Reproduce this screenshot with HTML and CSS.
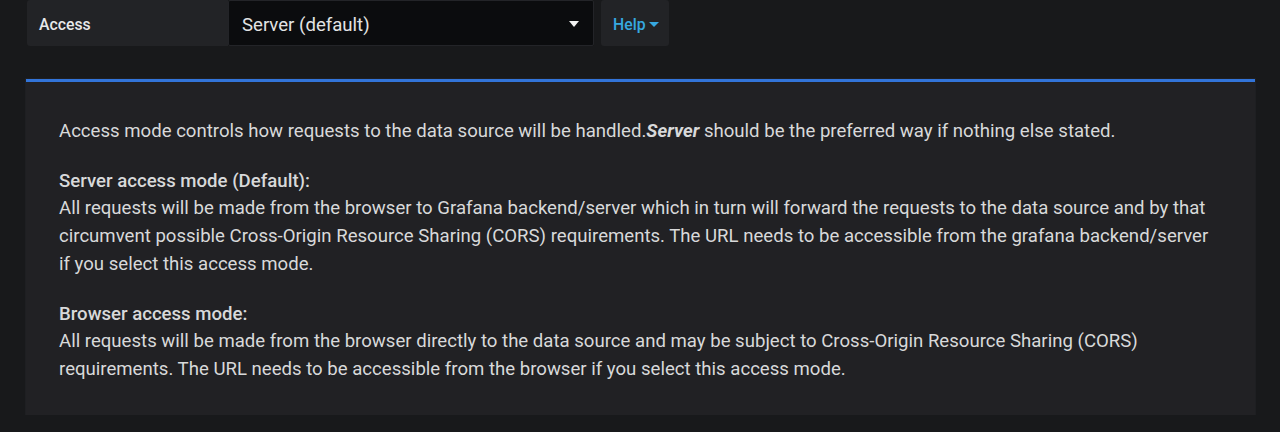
FILE: index.html
```html
<!DOCTYPE html>
<html>
<head>
<meta charset="utf-8">
<link rel="stylesheet" href="styles.css">
</head>
<body>
<div class="page">
  <div class="form-row">
    <div class="label">Access</div>
    <div class="select">
      <span>Server (default)</span>
      <span class="caret"></span>
    </div>
    <div class="help">Help<span class="help-caret"></span></div>
  </div>
  <div class="panel">
    <p>Access mode controls how requests to the data source will be handled.<em>Server</em> should be the preferred way if nothing else stated.</p>
    <p><strong>Server access mode (Default):</strong><br>All requests will be made from the browser to Grafana backend/server which in turn will forward the requests to the data source and by that circumvent possible Cross-Origin Resource Sharing (CORS) requirements. The URL needs to be accessible from the grafana backend/server if you select this access mode.</p>
    <p><strong>Browser access mode:</strong><br>All requests will be made from the browser directly to the data source and may be subject to Cross-Origin Resource Sharing (CORS) requirements. The URL needs to be accessible from the browser if you select this access mode.</p>
  </div>
</div>
</body>
</html>
```

FILE: styles.css
```css
html, body {
  margin: 0;
  padding: 0;
  background: #18191b;
}
body {
  font-family: Roboto, "Liberation Sans", sans-serif;
  color: #d8d9da;
}
.page {
  padding: 0 25px 0 26px;
}
.form-row {
  display: flex;
  align-items: stretch;
  height: 46px;
  margin-left: 1px;
}
.label {
  width: 201px;
  padding: 2px 0 0 12px;
  box-sizing: border-box;
  background: #222326;
  border-radius: 3px 0 0 3px;
  display: flex;
  align-items: center;
  font-size: 15.8px;
  font-weight: 500;
  color: #e8e9ea;
}
.select {
  width: 366px;
  padding: 3px 13px 0 13px;
  background: #0b0c0e;
  border: 1px solid #232428;
  border-radius: 2px;
  display: flex;
  align-items: center;
  justify-content: space-between;
  font-size: 18.6px;
  color: #e2e3e4;
  box-sizing: border-box;
}
.caret {
  width: 0;
  height: 0;
  border-left: 5px solid transparent;
  border-right: 5px solid transparent;
  border-top: 6px solid #f2f2f2;
  margin-right: 1px;
  margin-top: -2px;
}
.help {
  width: 68px;
  margin-left: 7px;
  padding: 2px 0 0 12px;
  box-sizing: border-box;
  background: #222326;
  border-radius: 3px;
  display: flex;
  align-items: center;
  font-size: 15.8px;
  font-weight: 500;
  color: #36a8e0;
}
.help-caret {
  width: 0;
  height: 0;
  border-left: 5px solid transparent;
  border-right: 5px solid transparent;
  border-top: 5px solid #36a8e0;
  margin-left: 3px;
  margin-top: 1px;
}
.panel {
  margin-top: 33px;
  background: #212124;
  border-top: 3px solid #3274d9;
  box-shadow: 0 0 0 1px #1e1f22;
  padding: 36px 33px 31px 33px;
  font-size: 18.6px;
  line-height: 27.7px;
}
.panel p {
  margin: 0 0 22px 0;
}
.panel p:last-child {
  margin-bottom: 0;
}
.panel em {
  font-weight: 700;
  font-style: italic;
}
.panel strong {
  font-weight: 500;
}
```
